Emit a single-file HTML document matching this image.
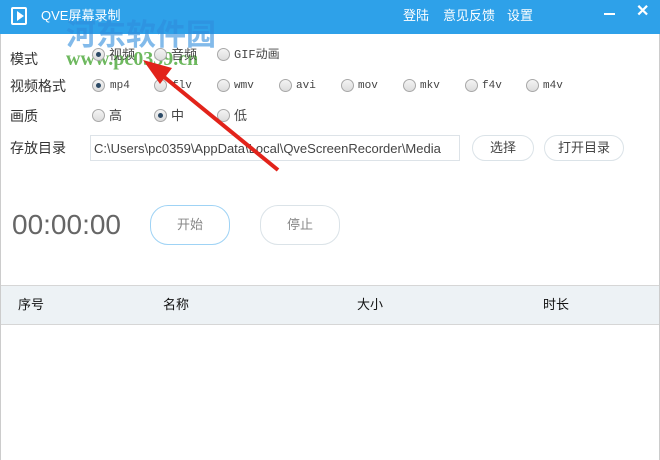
<!DOCTYPE html>
<html><head><meta charset="utf-8"><style>
*{margin:0;padding:0;box-sizing:border-box}
body{width:660px;height:460px;overflow:hidden;background:#fff;font-family:"Liberation Sans","Noto Sans CJK SC",sans-serif;position:relative;color:#333;line-height:14px}
.abs{position:absolute}
.title{left:0;top:0;width:660px;height:34px;background:#2ea1e9}
.t{font-size:13px;color:#fff}
.lbl{font-size:14px;color:#333}
.r{width:13px;height:13px;border-radius:50%;border:1px solid #a8a8a8;background:linear-gradient(#f4f4f4,#dcdcdc)}
.r.on::after{content:"";position:absolute;left:3px;top:3px;width:5px;height:5px;border-radius:50%;background:#2c4a66}
.mono{font-family:"Liberation Mono","Noto Sans CJK SC",monospace;font-size:11px;color:#444}
.opt{font-size:13px;color:#444}
.btn{border:1px solid #dbe3e8;border-radius:18px;font-size:13px;color:#444;text-align:center}
</style></head><body>
<div class="abs title"></div>
<div class="abs" style="left:0;top:34px;width:1px;height:426px;background:#ccc"></div>
<div class="abs" style="left:659px;top:34px;width:1px;height:426px;background:#ccc"></div>
<div class="abs" style="left:11px;top:7px;width:16px;height:18px;border:2px solid #fff;border-radius:2px"></div>
<div class="abs" style="left:17px;top:11px;width:0;height:0;border-left:7px solid #fff;border-top:5px solid transparent;border-bottom:5px solid transparent"></div>
<div class="abs t" style="left:41px;top:9px;font-size:13px">QVE屏幕录制</div>
<div class="abs t" style="left:403px;top:9px">登陆</div>
<div class="abs t" style="left:443px;top:9px">意见反馈</div>
<div class="abs t" style="left:507px;top:9px">设置</div>
<div class="abs" style="left:604px;top:13px;width:11px;height:2px;background:#fff"></div>
<div class="abs t" style="left:636px;top:5px;font-size:16px;font-weight:bold">✕</div>
<div class="abs" style="left:66px;top:16px;font-size:30px;line-height:32px;font-weight:bold;color:rgba(46,140,220,.6);font-family:'Noto Sans CJK SC',sans-serif">河东软件园</div>
<div class="abs" style="left:66px;top:48px;font-size:20px;line-height:22px;font-weight:bold;color:rgba(60,160,40,.75);font-family:'Liberation Serif',serif">www.pc0359.cn</div>

<div class="abs lbl" style="left:10px;top:52px">模式</div>
<div class="abs r on" style="left:92px;top:48px"></div><div class="abs opt" style="left:109px;top:48px">视频</div>
<div class="abs r" style="left:154px;top:48px"></div><div class="abs opt" style="left:171px;top:48px">音频</div>
<div class="abs r" style="left:217px;top:48px"></div><div class="abs opt mono" style="left:234px;top:48px;font-size:12px">GIF动画</div>

<div class="abs lbl" style="left:10px;top:79px">视频格式</div>
<div class="abs r on" style="left:92px;top:79px"></div><div class="abs mono" style="left:110px;top:79px">mp4</div>
<div class="abs r" style="left:154px;top:79px"></div><div class="abs mono" style="left:172px;top:79px">flv</div>
<div class="abs r" style="left:217px;top:79px"></div><div class="abs mono" style="left:234px;top:79px">wmv</div>
<div class="abs r" style="left:279px;top:79px"></div><div class="abs mono" style="left:296px;top:79px">avi</div>
<div class="abs r" style="left:341px;top:79px"></div><div class="abs mono" style="left:358px;top:79px">mov</div>
<div class="abs r" style="left:403px;top:79px"></div><div class="abs mono" style="left:420px;top:79px">mkv</div>
<div class="abs r" style="left:465px;top:79px"></div><div class="abs mono" style="left:482px;top:79px">f4v</div>
<div class="abs r" style="left:526px;top:79px"></div><div class="abs mono" style="left:543px;top:79px">m4v</div>

<div class="abs lbl" style="left:10px;top:109px">画质</div>
<div class="abs r" style="left:92px;top:109px"></div><div class="abs opt" style="left:109px;top:109px">高</div>
<div class="abs r on" style="left:154px;top:109px"></div><div class="abs opt" style="left:171px;top:109px">中</div>
<div class="abs r" style="left:217px;top:109px"></div><div class="abs opt" style="left:234px;top:109px">低</div>

<div class="abs lbl" style="left:10px;top:141px">存放目录</div>
<div class="abs" style="left:90px;top:135px;width:370px;height:26px;border:1px solid #dde3e8;font-size:13px;color:#444;padding:6px 0 0 3px;white-space:nowrap">C:\Users\pc0359\AppData\Local\QveScreenRecorder\Media</div>
<div class="abs btn" style="left:472px;top:135px;width:62px;height:26px;line-height:24px">选择</div>
<div class="abs btn" style="left:544px;top:135px;width:80px;height:26px;line-height:24px">打开目录</div>

<div class="abs" style="left:12px;top:210px;font-size:28px;line-height:30px;color:#666">00:00:00</div>
<div class="abs btn" style="left:150px;top:205px;width:80px;height:40px;line-height:38px;border-color:#9fd3f5;color:#888">开始</div>
<div class="abs btn" style="left:260px;top:205px;width:80px;height:40px;line-height:38px;color:#888">停止</div>

<div class="abs" style="left:1px;top:285px;width:658px;height:40px;background:#edf2f5;border-top:1px solid #d6d6d6;border-bottom:1px solid #d6d6d6"></div>
<div class="abs lbl" style="left:18px;top:298px;font-size:13px;color:#111">序号</div>
<div class="abs lbl" style="left:163px;top:298px;font-size:13px;color:#111">名称</div>
<div class="abs lbl" style="left:357px;top:298px;font-size:13px;color:#111">大小</div>
<div class="abs lbl" style="left:543px;top:298px;font-size:13px;color:#111">时长</div>

<svg class="abs" style="left:0;top:0" width="660" height="460"><line x1="278" y1="170" x2="158" y2="72" stroke="#e2231a" stroke-width="4"/><polygon points="143,60 172,68 160,84" fill="#e2231a"/></svg>
</body></html>
